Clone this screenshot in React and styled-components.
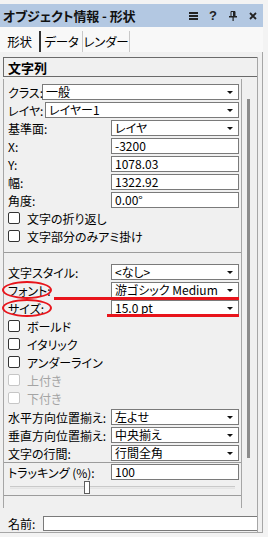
import React from 'react';
import styled, { createGlobalStyle } from 'styled-components';

const GlobalStyle = createGlobalStyle`
	body {
		margin: 0;
		background: #f3f3f3;
		font-family: "Noto Sans CJK JP", "Noto Sans", sans-serif;
		font-size: 12px;
		color: #000;
		font-feature-settings: "palt";
	}
`;

const Window = styled.div`
	width: 263px;
	padding-top: 4px;
`;

const TitleBar = styled.div`
	display: flex;
	align-items: center;
	height: 23px;
	background: #b3c8e2;
	padding-left: 3px;
`;

const Title = styled.span`
	font-size: 13px;
	font-weight: 700;
	letter-spacing: -0.1px;
	color: #111;
	white-space: pre;
`;

const TitleIcons = styled.div`
	display: flex;
	margin-left: auto;
`;

const TitleIcon = styled.span`
	width: 20px;
	display: flex;
	align-items: center;
	justify-content: center;
	font-family: "Liberation Sans", sans-serif;
	font-weight: 700;
	font-size: 13px;
	color: #222;
`;

const TabBar = styled.div`
	display: flex;
	height: 25px;
	background: #f8f8f8;
`;

const Tab = styled.div`
	flex: none;
	display: flex;
	align-items: center;
	justify-content: center;
	box-sizing: border-box;
	width: ${(p) => p.$w}px;
	margin-top: 4px;
	font-size: 12.5px;
	letter-spacing: -0.2px;
	white-space: nowrap;
	border-right: ${(p) => (p.$active ? '2px solid #333' : '1px solid #c8c8c8')};
`;

const Frame = styled.div`
	display: flex;
	flex-direction: column;
	height: 481px;
	box-sizing: border-box;
	padding: 5px 4px 0 3px;
	border-right: 1px solid #a6a6a6;
	border-bottom: 1px solid #a6a6a6;
	background: #f0f0f0;
`;

const Column = styled.div`
	flex: 1;
	display: flex;
	flex-direction: column;
	border-right: 1px solid #a6a6a6;
`;

const SectionHeader = styled.div`
	height: 20px;
	box-sizing: border-box;
	border: 1px solid #6a6a6a;
	border-right: none;
	display: flex;
	align-items: center;
	padding-left: 4px;
	font-size: 13px;
	font-weight: 700;
`;

const Middle = styled.div`
	display: flex;
	height: 429px;
	margin-top: 2px;
`;

const Panel = styled.div`
	flex: 1;
	border-left: 1px solid #a6a6a6;
	border-right: 1px solid #a6a6a6;
	padding-top: 4px;
`;

const ScrollTrack = styled.div`
	width: 15px;
	padding-top: 20px;
`;

const ScrollThumb = styled.div`
	width: 3px;
	height: 359px;
	margin-left: 5px;
	background: #8c8c8c;
`;

const Row = styled.div`
	position: relative;
	display: flex;
	align-items: center;
	height: 18px;
	padding: 0 2px 0 4px;
`;

const Label = styled.span`
	position: relative;
	flex: none;
	width: ${(p) => p.$w || 103}px;
	white-space: nowrap;
`;

const Field = styled.div`
	flex: 1;
	display: flex;
	align-items: center;
	height: 16px;
	box-sizing: border-box;
	border: 1px solid #7a7a7a;
	background: #fff;
	padding-left: 3px;
	white-space: nowrap;
	line-height: 14px;
`;

const FieldText = styled.span`
	flex: 1;
`;

const Arrow = styled.span`
	width: 16px;
	display: flex;
	justify-content: center;
	&::after {
		content: '';
		border-left: 3px solid transparent;
		border-right: 3px solid transparent;
		border-top: 3px solid #111;
	}
`;

const CheckRow = styled(Row)`
	color: ${(p) => (p.$disabled ? '#a4a4a4' : '#000')};
`;

const Box = styled.span`
	width: 12px;
	height: 12px;
	box-sizing: border-box;
	border: 1px solid ${(p) => (p.$disabled ? '#c6c6c6' : '#333')};
	border-radius: 2px;
	background: #fff;
	margin-right: 7px;
`;

const Separator = styled.div`
	height: 1px;
	background: #9c9c9c;
	margin: ${(p) => p.$m || '0'};
`;

const SliderRow = styled.div`
	height: 12px;
	padding: 0 6px;
	display: flex;
	align-items: center;
`;

const SliderTrack = styled.div`
	position: relative;
	flex: 1;
	height: 3px;
	box-sizing: border-box;
	border-top: 1px solid #c9c9c9;
	border-bottom: 1px solid #e4e4e4;
	background: #e9e9e9;
`;

const SliderThumb = styled.div`
	position: absolute;
	top: -6px;
	width: 6px;
	height: 13px;
	box-sizing: border-box;
	border: 1px solid #5e5e5e;
	background: #fff;
`;

const Ellipse = styled.span`
	position: absolute;
	left: -6px;
	top: -1px;
	width: 50px;
	height: 18px;
	box-sizing: border-box;
	border: 2px solid #e8141b;
	border-radius: 50%;
`;

const RedLine = styled.span`
	position: absolute;
	left: ${(p) => p.$left}px;
	right: 2px;
	top: ${(p) => p.$top}px;
	height: 3px;
	background: #e8141b;
`;

const NameRow = styled.div`
	display: flex;
	align-items: center;
	padding: 7px 0 4px 5px;
`;

const NameField = styled.div`
	flex: 1;
	height: 15px;
	box-sizing: border-box;
	border: 1px solid #7a7a7a;
	border-right: none;
	background: #fff;
	margin-left: 8px;
`;

function Dropdown({ value }) {
	return (
		<Field>
			<FieldText>{value}</FieldText>
			<Arrow />
		</Field>
	);
}

function Check({ label, disabled }) {
	return (
		<CheckRow $disabled={disabled}>
			<Box $disabled={disabled} />
			{label}
		</CheckRow>
	);
}

const MenuIcon = () => (
	<svg width="9" height="8" viewBox="0 0 9 8">
		<rect x="0" y="0" width="9" height="2" fill="#222" />
		<rect x="0" y="3" width="9" height="2" fill="#222" />
		<rect x="0" y="6" width="9" height="2" fill="#222" />
	</svg>
);

const PinIcon = () => (
	<svg width="8" height="10" viewBox="0 0 8 10">
		<path d="M2 0.5h4v5h-4z" fill="none" stroke="#222" />
		<rect x="4" y="0" width="2" height="6" fill="#222" />
		<rect x="0" y="5" width="8" height="1.5" fill="#222" />
		<rect x="3.5" y="6" width="1.2" height="4" fill="#222" />
	</svg>
);

const CloseIcon = () => (
	<svg width="8" height="8" viewBox="0 0 8 8">
		<path d="M1 1L7 7M7 1L1 7" stroke="#222" strokeWidth="1.8" />
	</svg>
);

export default function App() {
	const tracking = 0.33;

	return (
		<Window>
			<GlobalStyle />
			<TitleBar>
				<Title>オブジェクト情報 - 形状</Title>
				<TitleIcons>
					<TitleIcon>
						<MenuIcon />
					</TitleIcon>
					<TitleIcon>?</TitleIcon>
					<TitleIcon>
						<PinIcon />
					</TitleIcon>
					<TitleIcon>
						<CloseIcon />
					</TitleIcon>
				</TitleIcons>
			</TitleBar>

			<TabBar>
				<Tab $w={41} $active>形状</Tab>
				<Tab $w={42}>データ</Tab>
				<Tab $w={47}>レンダー</Tab>
			</TabBar>

			<Frame>
				<Column>
					<SectionHeader>文字列</SectionHeader>

					<Middle>
						<Panel>
							<Row>
								<Label $w={34}>クラス:</Label>
								<Dropdown value="一般" />
							</Row>
							<Row>
								<Label $w={37}>レイヤ:</Label>
								<Dropdown value="レイヤー1" />
							</Row>
							<Row>
								<Label>基準面:</Label>
								<Dropdown value="レイヤ" />
							</Row>
							<Row>
								<Label>X:</Label>
								<Field>-3200</Field>
							</Row>
							<Row>
								<Label>Y:</Label>
								<Field>1078.03</Field>
							</Row>
							<Row>
								<Label>幅:</Label>
								<Field>1322.92</Field>
							</Row>
							<Row>
								<Label>角度:</Label>
								<Field>0.00°</Field>
							</Row>
							<Check label="文字の折り返し" />
							<Check label="文字部分のみアミ掛け" />

							<Separator $m="7px 0 10px" />

							<Row>
								<Label>文字スタイル:</Label>
								<Dropdown value="<なし>" />
							</Row>
							<Row>
								<Label>
									フォント:
									<Ellipse />
								</Label>
								<Dropdown value="游ゴシック Medium" />
								<RedLine $left={50} $top={16} />
							</Row>
							<Row>
								<Label>
									サイズ:
									<Ellipse />
								</Label>
								<Dropdown value="15.0 pt" />
								<RedLine $left={103} $top={15} />
							</Row>
							<Check label="ボールド" />
							<Check label="イタリック" />
							<Check label="アンダーライン" />
							<Check label="上付き" disabled />
							<Check label="下付き" disabled />

							<Row style={{ marginTop: 1 }}>
								<Label>水平方向位置揃え:</Label>
								<Dropdown value="左よせ" />
							</Row>
							<Row>
								<Label>垂直方向位置揃え:</Label>
								<Dropdown value="中央揃え" />
							</Row>
							<Row>
								<Label>文字の行間:</Label>
								<Dropdown value="行間全角" />
							</Row>

							<Separator />

							<Row>
								<Label>トラッキング (%):</Label>
								<Field>100</Field>
							</Row>
							<SliderRow>
								<SliderTrack>
									<SliderThumb style={{ left: `${tracking * 224}px` }} />
								</SliderTrack>
							</SliderRow>

							<Separator $m="2px 0 0" />
						</Panel>
						<ScrollTrack>
							<ScrollThumb />
						</ScrollTrack>
					</Middle>

					<NameRow>
						名前:
						<NameField />
					</NameRow>
				</Column>
			</Frame>
		</Window>
	);
}
